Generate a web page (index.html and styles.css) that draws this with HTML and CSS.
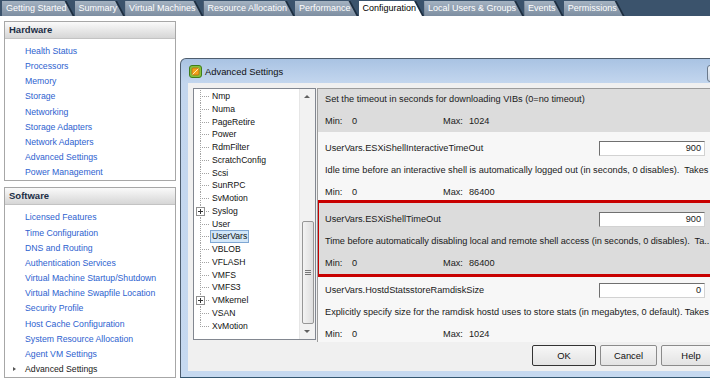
FILE: index.html
```html
<!DOCTYPE html>
<html>
<head>
    <title>Configuration - Advanced Settings</title>
    <link rel="stylesheet" href="styles.css">
</head>
<body>
    <div class="tabs">
        <div class="tab"><span>Getting Started</span></div>
        <div class="tab"><span>Summary</span></div>
        <div class="tab"><span>Virtual Machines</span></div>
        <div class="tab"><span>Resource Allocation</span></div>
        <div class="tab"><span>Performance</span></div>
        <div class="tab active"><span>Configuration</span></div>
        <div class="tab"><span>Local Users &amp; Groups</span></div>
        <div class="tab"><span>Events</span></div>
        <div class="tab"><span>Permissions</span></div>
    </div>

    <div class="side">
        <div class="box">
            <div class="box-head">Hardware</div>
            <ul class="links">
                <li>Health Status</li>
                <li>Processors</li>
                <li>Memory</li>
                <li>Storage</li>
                <li>Networking</li>
                <li>Storage Adapters</li>
                <li>Network Adapters</li>
                <li>Advanced Settings</li>
                <li>Power Management</li>
            </ul>
        </div>
        <div class="box">
            <div class="box-head">Software</div>
            <ul class="links">
                <li>Licensed Features</li>
                <li>Time Configuration</li>
                <li>DNS and Routing</li>
                <li>Authentication Services</li>
                <li>Virtual Machine Startup/Shutdown</li>
                <li>Virtual Machine Swapfile Location</li>
                <li>Security Profile</li>
                <li>Host Cache Configuration</li>
                <li>System Resource Allocation</li>
                <li>Agent VM Settings</li>
                <li class="current">Advanced Settings</li>
            </ul>
        </div>
    </div>

    <!-- dialog window floating over the page -->
    <div class="dialog">
        <div class="titlebar">
            <svg class="app-icon" width="13" height="13" viewBox="0 0 13 13">
                <rect x="0.5" y="0.5" width="12" height="12" rx="2.5" fill="#86c03c" stroke="#3f7d1a"/>
                <rect x="3" y="3" width="7" height="7" rx="1" fill="#f3a21c" stroke="#b9650e" stroke-width="0.8"/>
                <path d="M3.6 9.4 L9.4 3.6" stroke="#fff1b8" stroke-width="1"/>
            </svg>
            <span class="title">Advanced Settings</span>
            <div class="close"></div>
        </div>
        <div class="client">
            <div class="panes">
                <div class="tree">
                    <div class="tree-list">
                        <div>Nmp</div>
                        <div>Numa</div>
                        <div>PageRetire</div>
                        <div>Power</div>
                        <div>RdmFilter</div>
                        <div>ScratchConfig</div>
                        <div>Scsi</div>
                        <div>SunRPC</div>
                        <div>SvMotion</div>
                        <div><i class="exp"></i>Syslog</div>
                        <div>User</div>
                        <div class="sel"><span>UserVars</span></div>
                        <div>VBLOB</div>
                        <div>VFLASH</div>
                        <div>VMFS</div>
                        <div>VMFS3</div>
                        <div><i class="exp"></i>VMkernel</div>
                        <div>VSAN</div>
                        <div class="last">XvMotion</div>
                    </div>
                    <div class="scrollbar">
                        <div class="arrow up"></div>
                        <div class="thumb"><i></i></div>
                        <div class="spacer"></div>
                        <div class="arrow down"></div>
                    </div>
                </div>
                <div class="settings">
                    <!-- first entry is scrolled partly out of view -->
                    <div class="setting gray partial">
                        <div class="desc">Set the timeout in seconds for downloading VIBs (0=no timeout)</div>
                        <div class="range"><span class="min-l">Min:</span><span class="min-v">0</span><span class="max-l">Max:</span><span>1024</span></div>
                    </div>
                    <div class="setting">
                        <div class="row1"><span>UserVars.ESXiShellInteractiveTimeOut</span><div class="field">900</div></div>
                        <div class="desc">Idle time before an interactive shell is automatically logged out (in seconds, 0 disables).  Takes</div>
                        <div class="range"><span class="min-l">Min:</span><span class="min-v">0</span><span class="max-l">Max:</span><span>86400</span></div>
                    </div>
                    <div class="setting gray sel">
                        <div class="row1"><span>UserVars.ESXiShellTimeOut</span><div class="field">900</div></div>
                        <div class="desc">Time before automatically disabling local and remote shell access (in seconds, 0 disables).  Ta..</div>
                        <div class="range"><span class="min-l">Min:</span><span class="min-v">0</span><span class="max-l">Max:</span><span>86400</span></div>
                    </div>
                    <div class="setting">
                        <div class="row1"><span>UserVars.HostdStatsstoreRamdiskSize</span><div class="field">0</div></div>
                        <div class="desc">Explicitly specify size for the ramdisk hostd uses to store stats (in megabytes, 0 default). Takes</div>
                        <div class="range"><span class="min-l">Min:</span><span class="min-v">0</span><span class="max-l">Max:</span><span>1024</span></div>
                    </div>
                </div>
            </div>
            <div class="buttons">
                <div class="btn default">OK</div>
                <div class="btn cancel">Cancel</div>
                <div class="btn help">Help</div>
            </div>
        </div>
    </div>
</body>
</html>
```

FILE: styles.css
```css
html, body {
    margin: 0;
    padding: 0;
    overflow: hidden;
}
body {
    width: 710px;
    height: 383px;
    background: #fff;
    font-family: "Liberation Sans", Arial, sans-serif;
    position: relative;
}

/* top tab strip */
.tabs {
    height: 16px;
    box-sizing: border-box;
    padding: 1px 0 0 2px;
    background: #3b536c;
    display: flex;
}
.tab {
    height: 15px;
    background: #1d2e40;
    clip-path: polygon(0 0, calc(100% - 8px) 0, 100% 100%, 0 100%);
}
.tab span {
    display: block;
    height: 100%;
    padding: 0 8px 0 4px;
    line-height: 14px;
    font-size: 9px;
    color: #fff;
    white-space: nowrap;
    background: linear-gradient(#a4b2c1, #7d8ea1);
    clip-path: polygon(0 0, calc(100% - 10px) 0, calc(100% - 2px) 100%, 0 100%);
}
.tab.active span {
    background: #fff;
    color: #000;
}

/* left column */
.side {
    width: 172px;
    margin: 5px 0 0 4px;
}
.box {
    border: 1px solid #a7a7a7;
}
.box + .box {
    margin-top: 6px;
}
.box-head {
    height: 16px;
    line-height: 16px;
    padding-left: 4px;
    font-size: 9.5px;
    font-weight: bold;
    color: #1b2d45;
    background: linear-gradient(#fafafa, #d6d6d6);
    border-bottom: 1px solid #c3c3c3;
}
.links {
    list-style: none;
    margin: 0;
    padding: 5px 0 0 20px;
}
.links li {
    font-size: 8.7px;
    line-height: 15.15px;
    color: #2d62cf;
    white-space: nowrap;
}
.links li.current {
    color: #1a1a1a;
    position: relative;
}
.links li.current::before {
    content: "";
    position: absolute;
    left: -12px;
    top: 5px;
    border-left: 3px solid #555;
    border-top: 2.5px solid transparent;
    border-bottom: 2.5px solid transparent;
}

/* dialog window */
.dialog {
    position: absolute;
    left: 180px;
    top: 58px;
    width: 544px;
    padding: 0 0 6px 7px;
    border: 1px solid #4e5d6e;
    border-bottom-color: #34566f;
    border-radius: 6px 6px 0 0;
    background: linear-gradient(#a9c3e3, #c3d6ee 24px, #c6d9f0);
}
.titlebar {
    height: 24px;
    display: flex;
    align-items: center;
    gap: 3px;
    padding-left: 1px;
    position: relative;
}
.app-icon {
    display: block;
}
.title {
    font-size: 9.4px;
    color: #111;
}
.close {
    position: absolute;
    left: 519px;
    top: 6px;
    width: 40px;
    height: 15px;
    border: 1px solid #6b7a8c;
    border-radius: 3px;
    background: linear-gradient(#eef2f7, #c9d5e4);
}
.client {
    width: 536px;
    height: 288px;
    box-sizing: border-box;
    padding: 5px 0 0 5px;
    background: #f0f0f0;
}
.panes {
    display: flex;
    gap: 1px;
}

/* tree on the left */
.tree {
    width: 123px;
    height: 252px;
    box-sizing: border-box;
    border: 1px solid #828790;
    background: #fff;
    display: flex;
}
.tree-list {
    flex: 1;
    overflow: hidden;
    padding-top: 1px;
}
.tree-list div {
    height: 12.75px;
    line-height: 12.75px;
    padding-left: 18px;
    font-size: 8.6px;
    color: #111;
    white-space: nowrap;
    position: relative;
    background-image: repeating-linear-gradient(#a3a3a3 0 1px, transparent 1px 2px),
                      repeating-linear-gradient(90deg, #a3a3a3 0 1px, transparent 1px 2px);
    background-size: 1px 100%, 9px 1px;
    background-position: 6px 0, 6px 6px;
    background-repeat: no-repeat;
}
.tree-list div.last {
    background-size: 1px 7px, 9px 1px;
}
.tree-list .sel span {
    display: inline-block;
    height: 11px;
    line-height: 11px;
    vertical-align: top;
    margin-left: -2px;
    padding: 0 1px;
    background: #d3e7f8;
    border: 1px solid #7fa7d3;
}
.exp {
    position: absolute;
    left: 2px;
    top: 2px;
    width: 7px;
    height: 7px;
    border: 1px solid #8f8f8f;
    background: linear-gradient(#333, #333) center / 5px 1px no-repeat,
                linear-gradient(#333, #333) center / 1px 5px no-repeat,
                #fff;
}
.scrollbar {
    width: 15px;
    background: #f2f2f2;
    border-left: 1px solid #e6e6e6;
    display: flex;
    flex-direction: column;
    align-items: center;
}
.arrow {
    height: 16px;
    width: 100%;
    position: relative;
}
.arrow::after {
    content: "";
    position: absolute;
    left: 4px;
    top: 6px;
    border-left: 3px solid transparent;
    border-right: 3px solid transparent;
}
.arrow.up::after {
    border-bottom: 3px solid #606060;
}
.arrow.down {
    height: 15px;
}
.arrow.down::after {
    border-top: 3px solid #606060;
}
.thumb {
    margin-top: 116px;
    width: 12px;
    height: 103px;
    box-sizing: border-box;
    border: 1px solid #979797;
    border-radius: 2px;
    background: linear-gradient(90deg, #f4f4f4, #dedede);
    display: flex;
    align-items: center;
    justify-content: center;
}
.thumb i {
    width: 6px;
    height: 5px;
    background: repeating-linear-gradient(#777 0 1px, transparent 1px 2px);
}
.spacer {
    flex: 1;
}

/* settings list on the right */
.settings {
    width: 394px;
    height: 254px;
    box-sizing: border-box;
    border-left: 1px solid #9c9c9c;
    border-top: 1px solid #9c9c9c;
    overflow: hidden;
}
.setting {
    height: 71px;
    box-sizing: border-box;
    padding: 8px 6px 5px 7px;
    font-size: 9.2px;
    color: #1a1a1a;
    background: #f7f7f7;
    white-space: nowrap;
    overflow: hidden;
}
.setting.gray {
    background: #dcdcdc;
}
.setting.partial {
    height: 43px;
    padding-top: 4px;
}
.setting.partial .desc {
    margin-top: 0;
}
.setting.sel {
    height: 77px;
    margin: -3px 0;
    padding-left: 6px;
    border: 3px solid #c80000;
    border-left-width: 1px;
    border-right-width: 0;
    position: relative;
    z-index: 1;
}
.setting.sel .desc {
    letter-spacing: -0.04px;
}
.row1 {
    height: 16px;
    display: flex;
    justify-content: space-between;
    align-items: center;
}
.field {
    width: 106px;
    height: 15px;
    flex-shrink: 0;
    box-sizing: border-box;
    padding-right: 3px;
    line-height: 13px;
    text-align: right;
    background: #fff;
    border: 1px solid;
    border-color: #707070 #d2d2d2 #d2d2d2 #707070;
}
.desc {
    margin-top: 8px;
    line-height: 12px;
    white-space: pre;
}
.range {
    margin-top: 10px;
    line-height: 12px;
    display: flex;
}
.range span {
    flex-shrink: 0;
}
.min-l {
    width: 27px;
}
.min-v {
    width: 91px;
}
.max-l {
    width: 26px;
}

/* dialog buttons */
.buttons {
    display: flex;
    justify-content: flex-end;
    gap: 4px;
    margin-top: 3px;
    padding-right: 3px;
}
.btn {
    height: 21px;
    box-sizing: border-box;
    border: 1px solid #8b8b8b;
    border-radius: 2px;
    background: linear-gradient(#f7f7f7, #e3e3e3);
    font-size: 9.4px;
    color: #111;
    display: flex;
    align-items: center;
    justify-content: center;
}
.btn.default {
    width: 64px;
    border-color: #333;
}
.btn.cancel {
    width: 57px;
}
.btn.help {
    width: 60px;
}
```
